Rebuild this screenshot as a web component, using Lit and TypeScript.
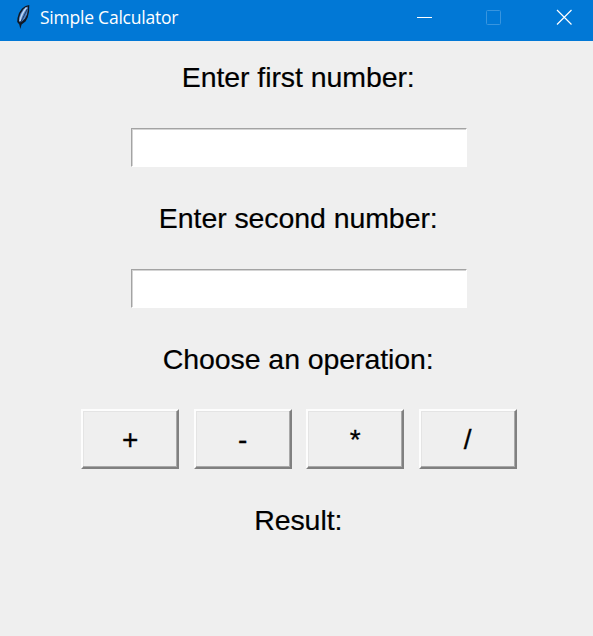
import { LitElement, html, css } from "lit";
import { customElement } from "lit/decorators.js";

@customElement("app-root")
export class AppRoot extends LitElement {
  static styles = css`
    :host {
      display: flex;
      flex-direction: column;
      width: 593px;
      height: 636px;
      background: #efefef;
      color: #000;
      font-family: "Liberation Sans", Arial, sans-serif;
      overflow: hidden;
    }
    .titlebar {
      display: flex;
      align-items: center;
      flex: none;
      height: 41px;
      box-sizing: border-box;
      padding: 0 0 7px 15px;
      background: #0178d6;
      color: #fff;
    }
    .feather { width: 16px; height: 26px; flex: none; display: block; }
    .title {
      margin-left: 9px;
      flex: 1;
      font: 17.5px/24px "Open Sans", "Noto Sans", sans-serif;
      letter-spacing: -0.23px;
      white-space: nowrap;
    }
    .controls { display: flex; gap: 54px; padding-right: 21px; }
    .controls svg { width: 16px; height: 16px; display: block; }
    .form {
      display: flex;
      flex-direction: column;
      align-items: center;
      padding: 19px 0 0 5px;
    }
    .label {
      font-size: 28.5px;
      line-height: 34px;
      height: 34px;
      letter-spacing: -0.08px;
      margin-right: 1.5px;
      white-space: nowrap;
      -webkit-text-stroke: 0.18px #000;
    }
    .entry {
      display: block;
      box-sizing: border-box;
      width: 336px;
      height: 39px;
      margin: 34px 0 34px;
      padding: 0 4px;
      border: 1px solid #fff;
      border-top-color: #a3a3a3;
      border-left-color: #a3a3a3;
      border-radius: 0;
      background: #fff;
      box-shadow: inset 1px 1px #d4d4d4;
      font: 28px "Liberation Sans", Arial, sans-serif;
      outline: none;
    }
    .ops { display: flex; gap: 14.5px; margin: 33px 0 34px; }
    .op {
      width: 98px;
      height: 60px;
      padding: 0;
      border: 2px solid;
      border-color: #fdfdfd #808080 #808080 #fdfdfd;
      border-radius: 0;
      background: #efefef;
      color: #000;
      font: 28px/55px "Liberation Sans", Arial, sans-serif;
      -webkit-text-stroke: 0.3px #000;
      box-shadow: inset -1px -1px #a9a9a9, inset 1px 1px #e4e4e4;
    }
  `;

  render() {
    return html`
      <div class="titlebar">
        <svg class="feather" viewBox="0 0 16 26">
          <path d="M14.300 1L10.500 2L7 4.500L4 9L2.500 14L2.200 18L4.300 20.500L5.300 25L6.600 20.500L10.500 17.500L12.700 13.500L14 8Z" fill="#101824"/>
          <path d="M12.800 2.500L8.500 5L5.500 9.500L4 14L4.200 18L7 17.500L10 14.500L12 10.500L12.800 6Z" fill="#4f82c6"/>
          <path d="M11.500 3.500C9 6.500 6 11 5 17" stroke="#bfd6f4" stroke-width="1.500" fill="none"/>
          <path d="M12.300 5C10.500 9 8.500 13 5.500 18.500" stroke="#1c3153" stroke-width="0.900" fill="none"/>
        </svg>
        <span class="title">Simple Calculator</span>
        <div class="controls">
          <svg viewBox="0 0 16 16"><path d="M1 8.500H16" stroke="#fff"/></svg>
          <svg viewBox="0 0 16 16"><rect x="0.500" y="1.500" width="14" height="14" rx="1" fill="none" stroke="#3895df"/></svg>
          <svg viewBox="0 0 16 16"><path d="M1 1L15.500 15.500M15.500 1L1 15.500" stroke="#fff" stroke-width="1.200"/></svg>
        </div>
      </div>
      <div class="form">
        <div class="label">Enter first number:</div>
        <input class="entry" type="text" />
        <div class="label">Enter second number:</div>
        <input class="entry" type="text" />
        <div class="label">Choose an operation:</div>
        <div class="ops">
          ${["+", "-", "*", "/"].map((op) => html`<button class="op">${op}</button>`)}
        </div>
        <div class="label">Result:</div>
      </div>
    `;
  }
}
